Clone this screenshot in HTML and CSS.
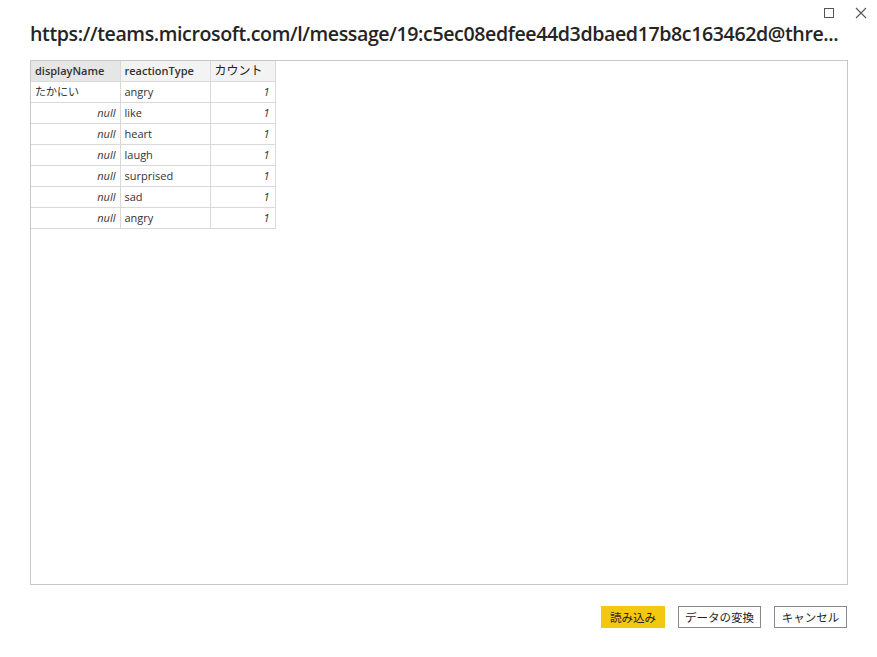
FILE: index.html
```html
<!DOCTYPE html>
<html lang="ja">
<head>
<meta charset="utf-8">
<link rel="stylesheet" href="styles.css">
</head>
<body>
<div class="dialog">
  <div class="controls">
    <span class="ctl"><svg width="10" height="10" viewBox="0 0 10 10"><rect x="0.5" y="0.5" width="9" height="9" fill="none" stroke="#555" stroke-width="1"/></svg></span>
    <span class="ctl"><svg width="12" height="12" viewBox="0 0 12 12"><path d="M1 1 L11 11 M11 1 L1 11" stroke="#555" stroke-width="1.1" fill="none"/></svg></span>
  </div>
  <h1 class="title">https://teams.microsoft.com/l/message/19:c5ec08edfee44d3dbaed17b8c163462d@thre...</h1>
  <div class="preview">
    <table class="grid">
      <thead>
        <tr><th class="sel c1">displayName</th><th class="c2">reactionType</th><th class="c3">カウント</th></tr>
      </thead>
      <tbody>
        <tr><td>たかにい</td><td>angry</td><td class="num">1</td></tr>
        <tr><td class="nul">null</td><td>like</td><td class="num">1</td></tr>
        <tr><td class="nul">null</td><td>heart</td><td class="num">1</td></tr>
        <tr><td class="nul">null</td><td>laugh</td><td class="num">1</td></tr>
        <tr><td class="nul">null</td><td>surprised</td><td class="num">1</td></tr>
        <tr><td class="nul">null</td><td>sad</td><td class="num">1</td></tr>
        <tr><td class="nul">null</td><td>angry</td><td class="num">1</td></tr>
      </tbody>
    </table>
  </div>
  <div class="actions">
    <button class="btn primary">読み込み</button>
    <button class="btn w2">データの変換</button>
    <button class="btn w3">キャンセル</button>
  </div>
</div>
</body>
</html>
```

FILE: styles.css
```css
html, body {
  margin: 0;
  padding: 0;
  background: #ffffff;
}
body {
  font-family: "Open Sans", "Noto Sans CJK JP", sans-serif;
  color: #252423;
}
.dialog {
  position: relative;
  width: 877px;
  height: 657px;
  padding: 0 30px;
  box-sizing: border-box;
  display: flex;
  flex-direction: column;
}
.controls {
  position: absolute;
  top: 7px;
  right: 10px;
  display: flex;
  gap: 20px;
  align-items: center;
}
.ctl {
  display: flex;
  width: 12px;
  height: 12px;
  align-items: center;
  justify-content: center;
}
.title {
  margin: 0;
  height: 60px;
  line-height: 67px;
  font-size: 19.6px;
  font-weight: 600;
  letter-spacing: -0.4px;
  color: #252423;
  white-space: nowrap;
  overflow: hidden;
}
.preview {
  width: 818px;
  height: 525px;
  border: 1px solid #c8c8c8;
  box-sizing: border-box;
}
.grid {
  border-collapse: collapse;
  font-size: 11px;
  color: #333333;
  table-layout: fixed;
}
.grid th, .grid td {
  height: 20px;
  padding: 0 4px;
  border-right: 1px solid #d9d9d9;
  border-bottom: 1px solid #d9d9d9;
  box-sizing: border-box;
  white-space: nowrap;
  text-align: left;
  font-weight: normal;
  line-height: 20px;
}
.grid th {
  background: #f3f3f3;
  font-weight: 600;
  color: #333;
}
.grid th.sel { background: #e6e6e6; }
.grid th.c3 { font-weight: normal; font-size: 12px; color: #222; }
.c1 { width: 89px; }
.c2 { width: 90px; }
.c3 { width: 65px; }
.grid td.nul, .grid td.num {
  text-align: right;
  font-style: italic;
}
.grid td.num { padding-right: 5px; }
.actions {
  display: flex;
  justify-content: flex-end;
  gap: 13px;
  margin-top: 21px;
}
.btn {
  height: 22px;
  padding: 0;
  font-family: "Open Sans", "Noto Sans CJK JP", sans-serif;
  font-size: 11.5px;
  color: #252423;
  background: #ffffff;
  border: 1px solid #8a8886;
  box-sizing: border-box;
  display: flex;
  align-items: center;
  justify-content: center;
}
.btn.primary {
  width: 64px;
  background: #f2c811;
  border-color: #f2c811;
}
.btn.w2 { width: 83px; }
.btn.w3 { width: 73px; }
```
